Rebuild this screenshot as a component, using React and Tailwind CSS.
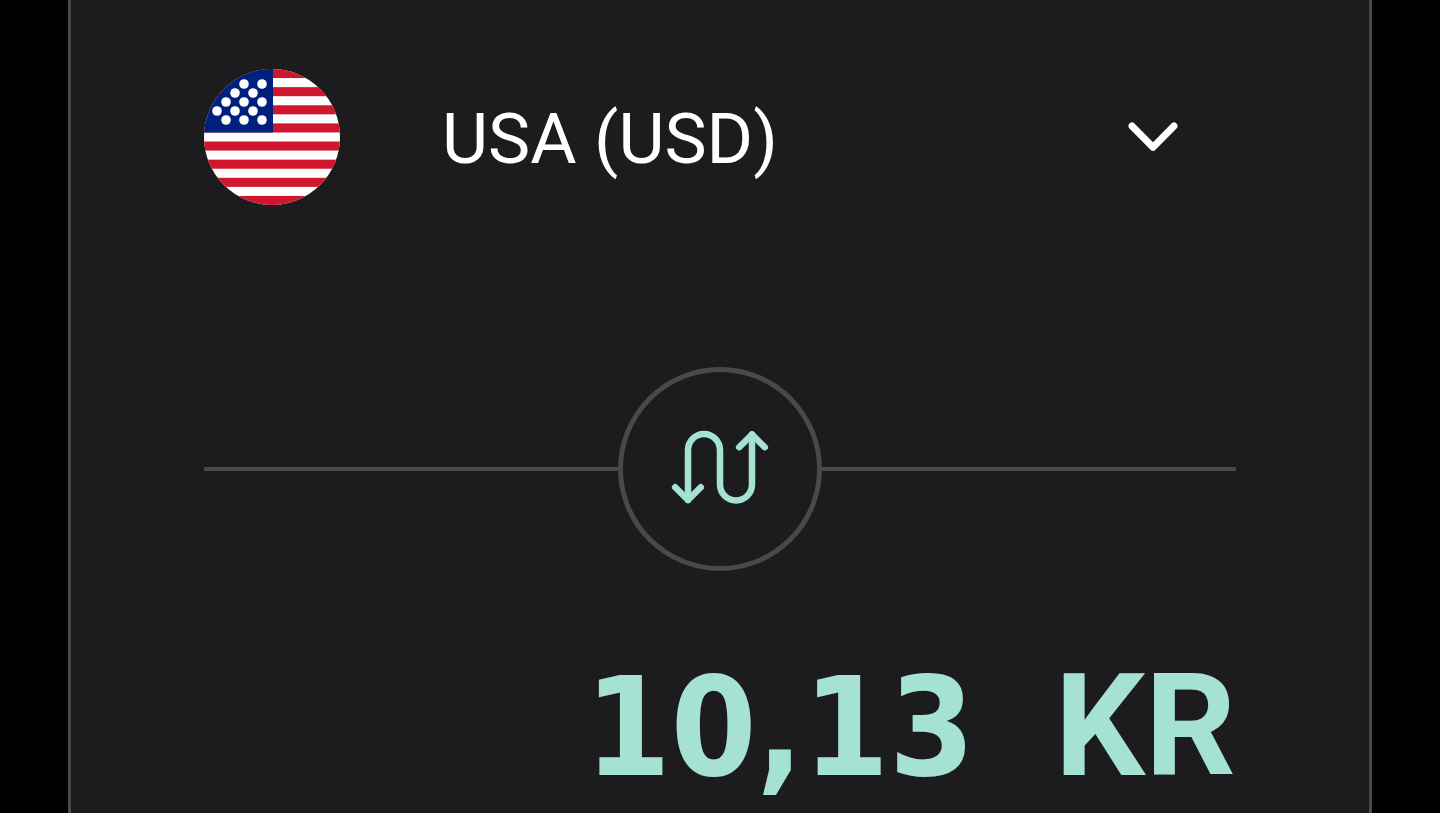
import { useState } from "react";

const STRIPES = [0, 2, 4, 6, 8, 10, 12, 14];

const STARS = [
  [40, 15], [58, 15],
  [31, 24], [49, 24],
  [22, 33], [40, 33], [58, 33],
  [13, 42], [31, 42], [49, 42],
  [22, 51], [40, 51], [58, 51],
];

function UsaFlag() {
  return (
    <svg viewBox="0 0 136 136" className="size-[136px] shrink-0 rounded-full" aria-hidden="true">
      <rect width="136" height="136" fill="#fff" />
      {STRIPES.map((row) => (
        <rect key={row} y={(row * 136) / 15} width="136" height={136 / 15} fill="#d0162d" />
      ))}
      <rect width="69" height="63.5" fill="#00207d" />
      {STARS.map(([x, y]) => (
        <circle key={`${x}-${y}`} cx={x} cy={y} r="4.8" fill="#fff" />
      ))}
    </svg>
  );
}

function Chevron() {
  return (
    <svg viewBox="0 0 50 30" className="pointer-events-none col-start-1 row-start-1 mr-[58px] h-[30px] w-[50px] justify-self-end" aria-hidden="true">
      <path d="M4 4L25 25.300L46 4" fill="none" stroke="#fff" strokeWidth="7" strokeLinecap="round" strokeLinejoin="round" />
    </svg>
  );
}

function SwapIcon() {
  return (
    <svg viewBox="0 0 96 76" className="h-[76px] w-24 overflow-visible" fill="none" stroke="currentColor" strokeWidth="6.500" strokeLinecap="round" strokeLinejoin="round" aria-hidden="true">
      <path d="M16 69V19a16 16 0 0 1 32 0V53.500a16 16 0 0 0 32 0V3.500" />
      <path d="M3.200 56.200L16 69L28.800 56.200" />
      <path d="M67.200 16.300L80 3.500L92.800 16.300" />
    </svg>
  );
}

export default function App() {
  const [currency, setCurrency] = useState("USD");

  return (
    <div className="min-h-screen bg-black px-[68px] font-['Roboto',sans-serif]">
      <main className="min-h-screen border-x-[3px] border-[#49494b] bg-[#1c1c1e] px-[133px] pt-[69px]">
        <div className="flex items-center">
          <UsaFlag />
          <div className="grid flex-1 items-center">
            <select
              aria-label="Currency"
              value={currency}
              onChange={(event) => setCurrency(event.target.value)}
              className="col-start-1 row-start-1 h-[136px] w-full appearance-none bg-transparent pt-1 pl-[102px] text-[71px] text-white"
            >
              <option value="USD">USA (USD)</option>
            </select>
            <Chevron />
          </div>
        </div>

        <div className="mt-[162px] flex items-center">
          <div className="h-1 flex-1 bg-[#49494b]" />
          <button
            type="button"
            aria-label="Swap currencies"
            className="flex size-[204px] items-center justify-center rounded-full border-[5px] border-[#49494b] text-[#a6e2d2]"
          >
            <SwapIcon />
          </button>
          <div className="h-1 flex-1 bg-[#49494b]" />
        </div>

        <output className="mt-[72px] flex items-baseline justify-end gap-20 leading-[168px] font-bold text-[#a6e2d2]">
          <span className="font-['DejaVu_Sans_Condensed','DejaVu_Sans',sans-serif] text-[137px]">10,13</span>
          <span className="text-[142px]">KR</span>
        </output>
      </main>
    </div>
  );
}
